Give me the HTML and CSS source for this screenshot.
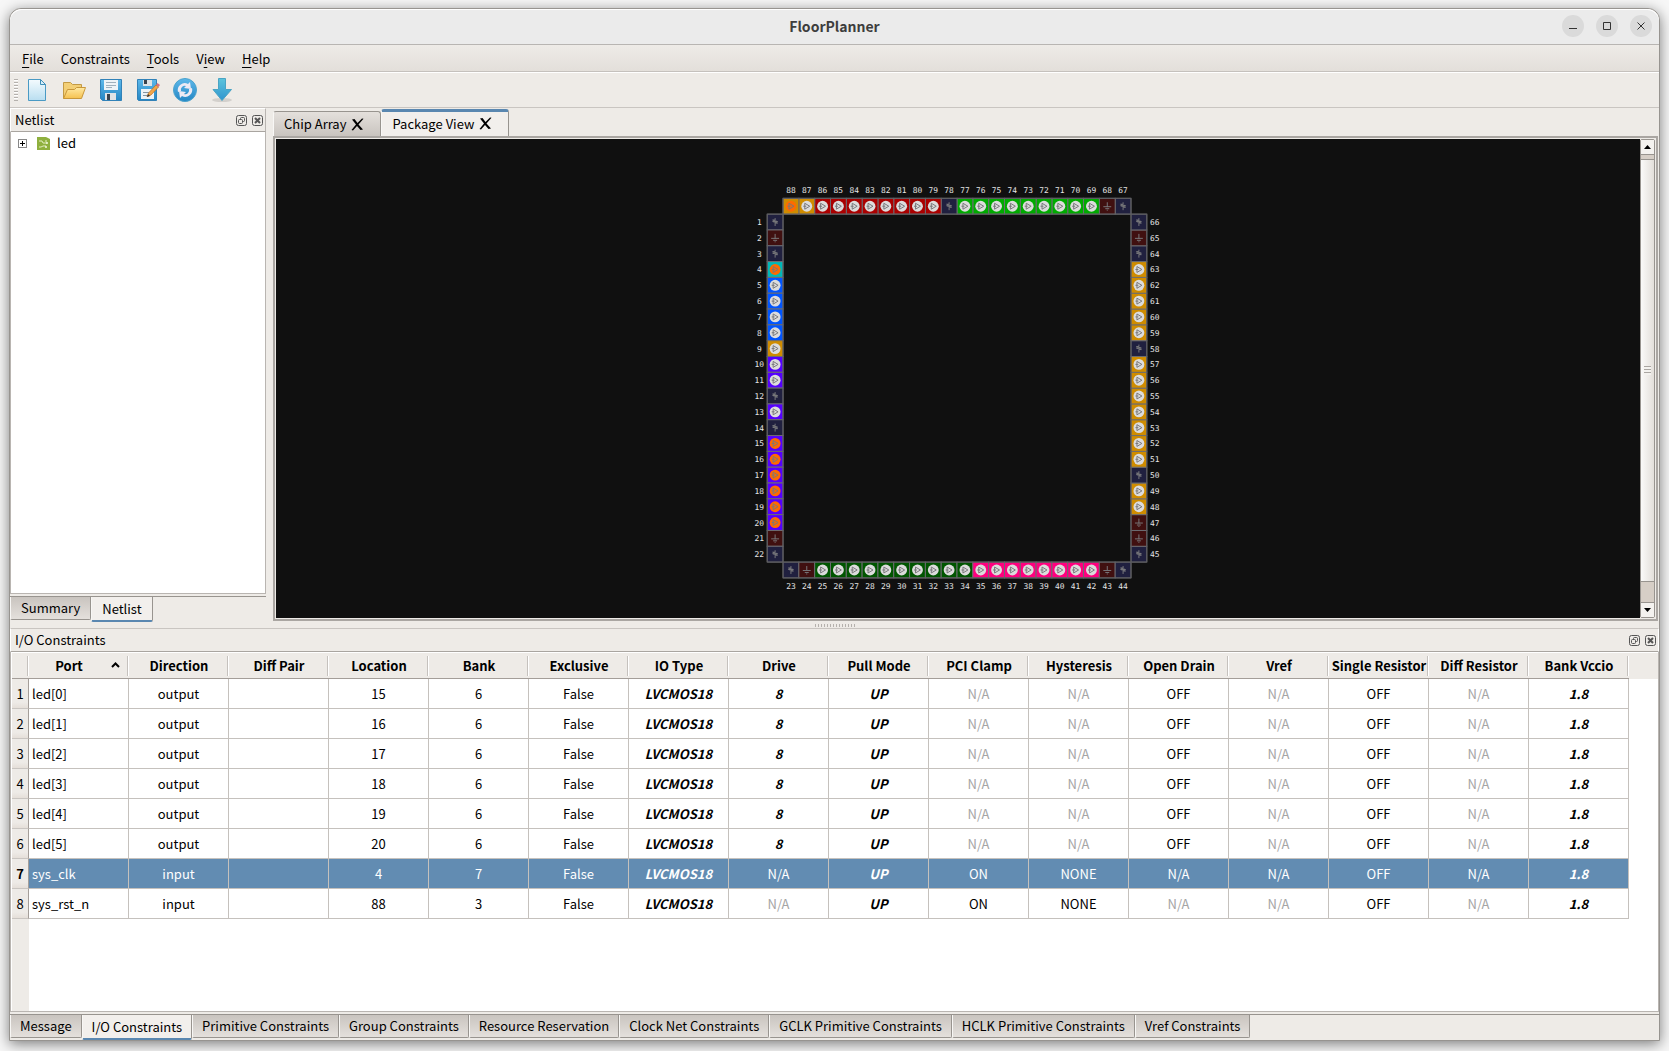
FILE: index.html
```html
<!DOCTYPE html>
<html lang="en">
<head>
  <meta charset="UTF-8" />
  <meta name="viewport" content="width=device-width, initial-scale=1.0">
  <title>FloorPlanner</title>
  <link rel="stylesheet" href="styles.css">
</head>
<body>
  <svg class="defs" aria-hidden="true">
    <defs>
      <linearGradient id="blue" x1="0" y1="0" x2="0" y2="1"><stop offset="0" stop-color="#5db8ea"/><stop offset="1" stop-color="#2486c4"/></linearGradient>
      <linearGradient id="page" x1="0" y1="0" x2="0" y2="1"><stop offset="0" stop-color="#f4fbfe"/><stop offset="1" stop-color="#b9def0"/></linearGradient>
      <linearGradient id="arrow" x1="0" y1="0" x2="0" y2="1"><stop offset="0" stop-color="#5cc4dc"/><stop offset="1" stop-color="#3095cf"/></linearGradient>
      <linearGradient id="folder" x1="0" y1="0" x2="0" y2="1"><stop offset="0" stop-color="#ffe9a3"/><stop offset="1" stop-color="#f5c14f"/></linearGradient>
      <symbol id="float" viewBox="0 0 11 11"><rect x="0.5" y="0.5" width="10" height="10" rx="2"/><rect x="4.5" y="2.5" width="4" height="4" rx="1"/><rect x="2.5" y="4.5" width="4" height="4" rx="1" fill="#eeebe7"/></symbol>
      <symbol id="close" viewBox="0 0 11 11"><rect x="0.5" y="0.5" width="10" height="10" rx="2"/><path d="M3 3l5 5M8 3l-5 5" stroke-width="2"/></symbol>
      <symbol id="tab-x" viewBox="0 0 13 13"><path d="M1 1.500l2.500-.5 3 4L11 .5l1.500.3L7.500 6.500l4.500 5-2.500.5-3.500-4L2 12.500.5 12l4.500-5.500z"/></symbol>
    </defs>
  </svg>

  <div class="window">
    <header class="titlebar">
      <h1>FloorPlanner</h1>
      <div class="window-buttons">
        <button aria-label="Minimize"><svg viewBox="0 0 22 22"><path d="M7 13.500h8"/></svg></button>
        <button aria-label="Maximize"><svg viewBox="0 0 22 22"><path d="M7.500 7.500h7v7h-7z"/></svg></button>
        <button aria-label="Close"><svg viewBox="0 0 22 22"><path d="M7.500 7.500l7 7M14.500 7.500l-7 7"/></svg></button>
      </div>
    </header>

    <nav class="menubar">
      <button><u>F</u>ile</button>
      <button>Constraints</button>
      <button><u>T</u>ools</button>
      <button>V<u>i</u>ew</button>
      <button><u>H</u>elp</button>
    </nav>

    <div class="toolbar">
      <span class="handle"></span>
      <button aria-label="New">
        <svg viewBox="0 0 24 24"><path d="M3.500 1.500h12l5 5v16h-17z" fill="url(#page)" stroke="#4a9ac4"/><path d="M15.500 1.500v5h5z" fill="#d7eef9" stroke="#3f8fb9"/></svg>
      </button>
      <button aria-label="Open">
        <svg viewBox="0 0 24 24"><path d="M1.500 20.500V4.500h7l2 2h9v5" fill="#f3cf76" stroke="#c39a45"/><path d="M1.500 20.500l4-9h7l2-2h9l-4 11z" fill="url(#folder)" stroke="#c8973a"/></svg>
      </button>
      <button aria-label="Save">
        <svg viewBox="0 0 24 24"><path d="M1.500 1.500h21v21h-19l-2-2z" fill="url(#blue)" stroke="#3282b8"/><path d="M5 2h14v10H5z" fill="#edf3f7"/><path d="M7 4.500h10M7 7.500h10M7 9.500h6" stroke="#9fb0bd"/><path d="M6 15h11v7H6z" fill="#dfe3e6"/><path d="M8 16h3v6H8z" fill="#39434d"/></svg>
      </button>
      <button aria-label="Save As">
        <svg viewBox="0 0 24 24"><path d="M1.500 1.500h19v21h-18l-1-1z" fill="url(#blue)" stroke="#3282b8"/><path d="M7 2h9v6H7z" fill="#dfe3e6"/><path d="M8 2h3v4H8z" fill="#39434d"/><path d="M5 11h13v10H5z" fill="#edf3f7"/><path d="M7 14.500h6M7 17.500h4" stroke="#8296a6"/><path d="M11 18.500l1.500-3.500 7.500-8 2.500 2-7.500 8z" fill="#f2a64a" stroke="#b4702a" stroke-width=".7"/><path d="M20 7l1.500-2 2.500 2-1.500 2z" fill="#d9707c"/><path d="M11 19l1-3 2 2z" fill="#333"/></svg>
      </button>
      <button aria-label="Reload">
        <svg viewBox="0 0 24 24"><circle cx="12" cy="12" r="11.500" fill="url(#blue)" stroke="#4ca3cd"/><path d="M5 14a7 7 0 0 1 10-8l2-2 1 7-7-1 2-2a4 4 0 0 0-5 5z" fill="#edeaf4"/><path d="M19 10a7 7 0 0 1-10 8l-2 2-1-7 7 1-2 2a4 4 0 0 0 5-5z" fill="#edeaf4"/></svg>
      </button>
      <button aria-label="Download">
        <svg viewBox="0 0 24 24"><ellipse cx="12" cy="22" rx="10" ry="2" fill="#d3d0cc"/><path d="M8.500 .5h7v11h6L12 22.500l-9-11h5.500z" fill="url(#arrow)" stroke="#4aa4c4"/></svg>
      </button>
    </div>

    <main class="workspace">
      <section class="upper">
        <aside class="side-dock">
          <div class="dock-title">
            <h2>Netlist</h2>
            <button aria-label="Float"><svg><use href="#float"/></svg></button>
            <button aria-label="Close"><svg><use href="#close"/></svg></button>
          </div>
          <div class="tree">
            <div class="tree-item">
              <button class="expander" aria-label="Expand"></button>
              <svg class="module" viewBox="0 0 13 13"><path d="M0 0h9l4 2v11H0z" fill="#8fb03e"/><path d="M2 4h3l1 2h4M2 10h2l2-1h3M9 3v2" fill="none" stroke="#e2edbf"/><circle cx="10" cy="6" r="1" fill="#f2f7df"/><circle cx="9" cy="10" r="1" fill="#f2f7df"/></svg>
              <span>led</span>
            </div>
          </div>
          <div class="tabs tabs-bottom">
            <button class="tab">Summary</button>
            <button class="tab active">Netlist</button>
          </div>
        </aside>

        <div class="view">
          <div class="tabs tabs-top">
            <button class="tab">Chip Array <svg><use href="#tab-x"/></svg></button>
            <button class="tab active">Package View <svg><use href="#tab-x"/></svg></button>
          </div>
          <div class="view-frame">
            <div class="canvas">
              <svg id="package" viewBox="1 0 384 485"></svg>
            </div>
            <div class="scrollbar">
              <button aria-label="Scroll up"><svg viewBox="0 0 7 4"><path d="M0 4h7L3.500 0z"/></svg></button>
              <div class="track"><div class="thumb"></div></div>
              <button aria-label="Scroll down"><svg viewBox="0 0 7 4"><path d="M0 0h7L3.500 4z"/></svg></button>
            </div>
          </div>
        </div>
      </section>

      <div class="splitter"></div>

      <section class="lower">
        <div class="dock-title">
          <h2>I/O Constraints</h2>
          <button aria-label="Float"><svg><use href="#float"/></svg></button>
          <button aria-label="Close"><svg><use href="#close"/></svg></button>
        </div>
        <div class="table-area">
          <table>
            <thead><tr id="columns"></tr></thead>
            <tbody id="ports"></tbody>
          </table>
          <div class="filler"></div>
        </div>
        <div class="tabs tabs-bottom">
          <button class="tab">Message</button>
          <button class="tab active">I/O Constraints</button>
          <button class="tab">Primitive Constraints</button>
          <button class="tab">Group Constraints</button>
          <button class="tab">Resource Reservation</button>
          <button class="tab">Clock Net Constraints</button>
          <button class="tab">GCLK Primitive Constraints</button>
          <button class="tab">HCLK Primitive Constraints</button>
          <button class="tab">Vref Constraints</button>
        </div>
      </section>
    </main>
  </div>

  <script src="script.js"></script>
</body>
</html>
```
FILE: styles.css
```css
* {
  box-sizing: border-box;
}

body {
  margin: 0;
  height: 100vh;
  padding: 8px 9px 10px;
  display: flex;
  background: #f7f7f7;
  color: #000;
  font-family: "Noto Sans CJK SC", "Noto Sans", sans-serif;
  font-size: 13px;
  line-height: 20px;
  overflow: hidden;
}

button {
  font: inherit;
  color: inherit;
  background: none;
  border: none;
  padding: 0;
}

h1, h2 {
  margin: 0;
  font-size: 13px;
}

.defs {
  position: absolute;
  width: 0;
  height: 0;
}

.window {
  flex: 1;
  min-width: 0;
  display: flex;
  flex-direction: column;
  background: #eeebe7;
  border: 1px solid #979490;
  border-radius: 12px 12px 0 0;
  box-shadow: 0 3px 14px rgba(0, 0, 0, 0.5);
}

/* title bar */
.titlebar {
  height: 36px;
  display: grid;
  grid-template-columns: 1fr auto 1fr;
  align-items: center;
  padding-bottom: 2px;
  background: #ebebeb;
  border-bottom: 1px solid #b8b5b2;
  border-radius: 12px 12px 0 0;
  box-shadow: inset 0 1px #fff;
}

.titlebar h1 {
  grid-column: 2;
  font-size: 14px;
  color: #3d3d3d;
}

.window-buttons {
  display: flex;
  justify-content: flex-end;
  gap: 12px;
  padding-right: 7px;
}

.window-buttons button {
  width: 22px;
  height: 22px;
  border-radius: 50%;
  background: #dadada;
}

.window-buttons svg {
  display: block;
  fill: none;
  stroke: #333;
}

/* menu and tool bar */
.menubar {
  height: 27px;
  display: flex;
  align-items: center;
  gap: 17px;
  padding: 2px 0 0 12px;
  background: linear-gradient(#eeebe7, #e3dfda);
  border-bottom: 1px solid #c5c1bd;
}

.menubar u {
  text-underline-offset: 3px;
}

.toolbar {
  height: 36px;
  display: flex;
  align-items: center;
  gap: 13px;
  padding: 0 4px;
  border-top: 1px solid #fff;
  border-bottom: 1px solid #c9c5c1;
}

.toolbar button,
.toolbar svg {
  display: block;
  width: 24px;
  height: 24px;
}

.handle {
  width: 4px;
  height: 22px;
  margin-right: -6px;
  background: repeating-linear-gradient(#b5b1ad 0 1px, #fff 1px 2px, #eeebe7 2px 3px);
}

/* docks */
.workspace {
  flex: 1;
  min-height: 0;
  display: flex;
  flex-direction: column;
}

.upper {
  flex: 5 1 0;
  min-height: 0;
  display: flex;
  gap: 7px;
  padding-right: 1px;
}

.side-dock {
  width: 256px;
  display: flex;
  flex-direction: column;
}

.dock-title {
  height: 24px;
  display: flex;
  align-items: center;
  gap: 5px;
  padding: 0 2px 0 4px;
  border: 1px solid #fff;
  border-bottom-color: #a9a5a0;
}

.side-dock .dock-title {
  border-right-color: #b9b5b1;
}

.dock-title h2 {
  flex: 1;
  font-weight: normal;
}

.dock-title svg {
  display: block;
  width: 11px;
  height: 11px;
  fill: none;
  stroke: #555;
}

.tree {
  flex: 1;
  padding-top: 1px;
  background: #fff;
  border: 1px solid #b9b5b1;
  border-top: none;
}

.tree-item {
  display: flex;
  align-items: center;
  height: 20px;
  padding-left: 7px;
}

.expander {
  width: 9px;
  height: 9px;
  margin-right: 10px;
  border: 1px solid #888;
  background:
    linear-gradient(#000, #000) center / 5px 1px no-repeat,
    linear-gradient(#000, #000) center / 1px 5px no-repeat;
}

.module {
  width: 13px;
  height: 13px;
  margin-right: 7px;
}

.splitter {
  height: 6px;
  background: repeating-linear-gradient(90deg, #b5b1ad 0 1px, #eeebe7 1px 3px) center / 40px 3px no-repeat;
}

/* tabs */
.tabs {
  display: flex;
}

.tab {
  padding: 0 9px;
  background: linear-gradient(#c9c4bf, #e4e0dc);
  border: 1px solid #98948f;
  border-left-color: #f8f7f5;
}

.tab.active {
  background: #f2efec;
}

.tabs-bottom {
  height: 26px;
  margin-top: 2px;
  border-top: 1px solid #98948f;
}

.tabs-bottom .tab {
  height: 23px;
  line-height: 20px;
  border-top: none;
  border-radius: 0 0 2px 2px;
}

.tabs-bottom .tab.active {
  height: 25px;
  border-bottom: 2px solid #5a87b0;
}

.side-dock .tab {
  padding: 0 10px;
}

.tabs-top {
  height: 28px;
  align-items: flex-end;
}

.tabs-top .tab {
  height: 25px;
  display: flex;
  align-items: center;
  gap: 5px;
  padding: 0 16px 0 10px;
  border-bottom: none;
  border-radius: 3px 3px 0 0;
  background: linear-gradient(#e4e0dc, #c9c4bf);
}

.tabs-top .tab.active {
  height: 27px;
  padding-bottom: 1px;
  background: #f2efec;
  border-top: 3px solid #5a87b0;
}

.tabs-top svg {
  width: 13px;
  height: 13px;
}

/* package view */
.view {
  flex: 1;
  min-width: 0;
  display: flex;
  flex-direction: column;
}

.view-frame {
  flex: 1;
  min-height: 0;
  display: flex;
  margin-bottom: 1px;
  padding: 1px;
  border: 2px solid #aaa6a2;
}

.canvas {
  flex: 1;
  min-width: 0;
  background: #101010;
}

#package {
  display: block;
  width: 100%;
  height: 100%;
  overflow: visible;
}

.pin rect {
  stroke: #6d6d72;
}

.pin circle {
  fill: #dcdcdc;
}

.pin.used circle {
  fill: #ff6a00;
}

.pin path {
  fill: none;
  stroke: #77777a;
}

.outline {
  fill: none;
  stroke: #5c5c5f;
}

.pin text {
  fill: #e6e6e6;
  font-family: "DejaVu Sans Mono", monospace;
  font-size: 8px;
  text-anchor: middle;
}

.bank-orange { fill: #cf8c00; }
.bank-red { fill: #aa0000; }
.bank-green { fill: #00aa00; }
.bank-forest { fill: #005500; }
.bank-pink { fill: #ff007f; }
.bank-violet { fill: #5500ff; }
.bank-blue { fill: #0055ff; }
.bank-teal { fill: #00b8b8; }
.power { fill: #20203f; }
.ground { fill: #401010; }

.scrollbar {
  width: 15px;
  display: flex;
  flex-direction: column;
  background: #d6cec6;
  border: 1px solid #98948f;
  border-radius: 2px;
}

.scrollbar button {
  height: 14px;
  display: flex;
  align-items: center;
  justify-content: center;
  background: #f4f2ef;
}

.scrollbar button svg {
  width: 7px;
  height: 4px;
}

.track {
  flex: 1;
  padding: 4px 0 20px;
  border: 1px solid #98948f;
  border-width: 1px 0;
}

.thumb {
  height: 100%;
  background:
    repeating-linear-gradient(#aaa6a2 0 1px, #f4f2ef 1px 3px) center / 7px 9px no-repeat,
    linear-gradient(90deg, #fbfaf9, #e3dfda);
  border: 1px solid #98948f;
  border-width: 1px 0;
}

/* constraints table */
.lower {
  flex: 4 1 0;
  min-height: 0;
  display: flex;
  flex-direction: column;
}

.lower .dock-title {
  border-top-color: #c9c5c1;
}

.table-area {
  flex: 1;
  min-height: 0;
  display: flex;
  flex-direction: column;
  padding: 1px 1px 0;
  background: #fff;
  border: 1px solid #b9b5b1;
  border-top: none;
  overflow: hidden;
}

table {
  width: 1617px;
  table-layout: fixed;
  border-collapse: separate;
  border-spacing: 0;
  text-align: center;
}

thead {
  background: #eeebe7;
}

/* header strip runs on past the last column */
thead tr {
  box-shadow: 100px 0 #eeebe7;
}

th, td {
  padding: 0;
  white-space: nowrap;
}

thead th {
  width: 100px;
  height: 26px;
  border-bottom: 1px solid #a49e99;
  background: linear-gradient(90deg, #c5c1bd 50%, #fff 50%) right center / 2px 20px no-repeat;
}

thead th:first-child {
  width: 17px;
}

thead th:nth-child(2) {
  padding-right: 20px;
}

.sort {
  position: absolute;
  margin: 6px 0 0 28px;
  width: 9px;
  height: 6px;
}

tbody th {
  height: 30px;
  font-weight: normal;
  background: linear-gradient(#eeebe7 80%, #e5dfd9);
  border-right: 1px solid #a49e99;
  border-bottom: 1px solid #c9c5c1;
}

td {
  border-right: 1px solid #c5c1bd;
  border-bottom: 1px solid #c5c1bd;
}

td:nth-child(2) {
  padding-left: 3px;
  text-align: left;
}

.na {
  color: #a5a5a5;
}

.preset {
  font-weight: bold;
  font-style: italic;
}

.selected td {
  background: #628cb2;
  color: #fff;
}

.selected th {
  font-weight: bold;
}

.filler {
  flex: 1;
  width: 17px;
  background: #eeebe7;
}
```
FILE: script.js
```js
const columns = ["Port", "Direction", "Diff Pair", "Location", "Bank", "Exclusive", "IO Type", "Drive",
  "Pull Mode", "PCI Clamp", "Hysteresis", "Open Drain", "Vref", "Single Resistor", "Diff Resistor", "Bank Vccio"];

const ports = [
  ["led[0]", "output", "15", "6"],
  ["led[1]", "output", "16", "6"],
  ["led[2]", "output", "17", "6"],
  ["led[3]", "output", "18", "6"],
  ["led[4]", "output", "19", "6"],
  ["led[5]", "output", "20", "6"],
  ["sys_clk", "input", "4", "7"],
  ["sys_rst_n", "input", "88", "3"],
];

// columns drawn bold italic
const presets = [6, 7, 8, 15];

document.getElementById("columns").innerHTML = "<th></th>" + columns.map((name, i) => {
  const arrow = i === 0 ? '<svg class="sort" viewBox="0 0 9 6"><path d="M1 5l3.500-3.500L8 5" fill="none" stroke="#000" stroke-width="2"/></svg>' : "";
  return `<th>${name}${arrow}</th>`;
}).join("");

document.getElementById("ports").innerHTML = ports.map(([port, direction, location, bank], row) => {
  const rest = direction === "output"
    ? ["8", "UP", "N/A", "N/A", "OFF", "N/A", "OFF", "N/A", "1.8"]
    : ["N/A", "UP", "ON", "NONE", "N/A", "N/A", "OFF", "N/A", "1.8"];
  const selected = port === "sys_clk";
  const cells = [port, direction, "", location, bank, "False", "LVCMOS18", ...rest].map((value, i) => {
    let cls = "";
    if (value === "N/A") cls = selected ? "" : "na";
    else if (presets.includes(i)) cls = "preset";
    return `<td class="${cls}">${value}</td>`;
  });
  return `<tr class="${selected ? "selected" : ""}"><th>${row + 1}</th>${cells.join("")}</tr>`;
}).join("");

// package pins, 22 on each side
const cell = 16;
const top0 = 60;
const powerPins = [1, 3, 12, 14, 22, 23, 44, 45, 50, 58, 64, 66, 67, 78];
const groundPins = [2, 21, 24, 43, 46, 47, 65, 68];
const usedPins = [4, 15, 16, 17, 18, 19, 20, 88];

function pinKind(n) {
  if (powerPins.includes(n)) return "power";
  if (groundPins.includes(n)) return "ground";
  if (n === 4) return "bank-teal";
  if (n === 9) return "bank-orange";
  if (n < 9) return "bank-blue";
  if (n < 21) return "bank-violet";
  if (n < 35) return "bank-forest";
  if (n < 43) return "bank-pink";
  if (n < 64) return "bank-orange";
  if (n < 78) return "bank-green";
  if (n < 87) return "bank-red";
  return "bank-orange";
}

function drawPin(n) {
  let x, y, tx, ty;
  if (n <= 22) {
    x = 0; y = n * cell; tx = -8; ty = y + 11;
  } else if (n <= 44) {
    x = (n - 22) * cell; y = 23 * cell; tx = x + 8; ty = y + 27;
  } else if (n <= 66) {
    x = 23 * cell; y = (67 - n) * cell; tx = x + 24; ty = y + 11;
  } else {
    x = (89 - n) * cell; y = 0; tx = x + 8; ty = -5;
  }
  const kind = pinKind(n);
  let glyph = '<circle cx="8" cy="8" r="5.500"/><path d="M6 5l5 3-5 3zM4.500 8h3"/>';
  if (kind === "power") glyph = '<path d="M8 4v2H5.500l5 1.500h-5l5 1.500H8v3"/>';
  if (kind === "ground") glyph = '<path d="M8 4v5M4 8.500h8M6 10.500h4M7.500 12h1"/>';
  return `<g class="pin ${usedPins.includes(n) ? "used" : ""}">
    <g transform="translate(${x} ${y})"><rect class="${kind}" width="16" height="16"/>${glyph}</g>
    <text x="${tx}" y="${ty}">${n}</text></g>`;
}

let pins = "";
for (let n = 1; n <= 88; n++) pins += drawPin(n);
document.getElementById("package").innerHTML = `<g transform="translate(0 ${top0})">${pins}
  <path class="outline" d="M16 0h352v16h16v352h-16v16H16v-16H0V16h16zM16 16h352v352H16z"/></g>`;
```
